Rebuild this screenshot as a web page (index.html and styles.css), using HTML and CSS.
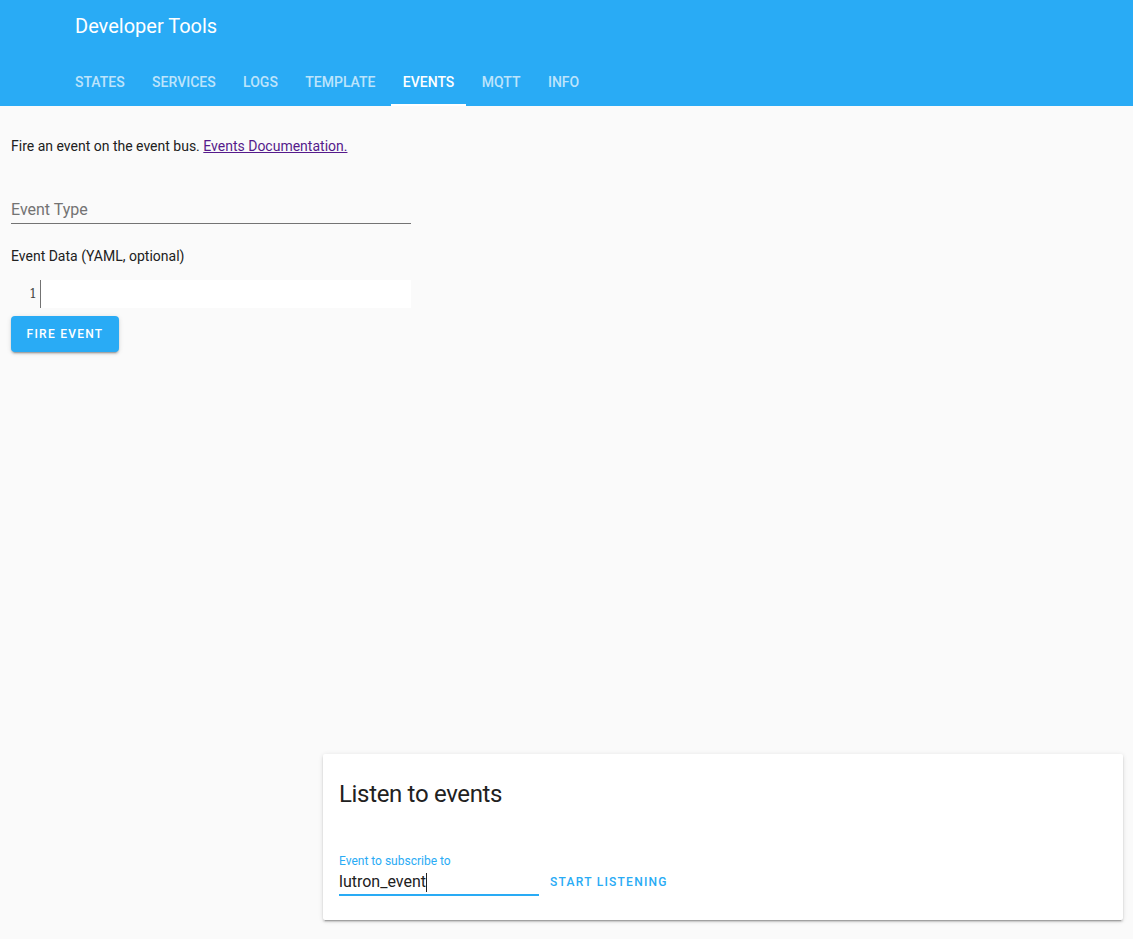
FILE: index.html
```html
<!DOCTYPE html>
<html lang="en">
<head>
<meta charset="utf-8">
<title>Developer Tools</title>
<link rel="stylesheet" href="styles.css">
</head>
<body>
<div class="page">
  <header class="header">
    <div class="title">Developer Tools</div>
    <nav class="tabs">
      <a class="tab">STATES</a>
      <a class="tab">SERVICES</a>
      <a class="tab">LOGS</a>
      <a class="tab">TEMPLATE</a>
      <a class="tab active">EVENTS</a>
      <a class="tab">MQTT</a>
      <a class="tab">INFO</a>
    </nav>
  </header>
  <main class="main">
    <section class="fire">
      <p class="intro">Fire an event on the event bus. <a class="doc" href="#">Events Documentation.</a></p>
      <div class="field"><span class="placeholder">Event Type</span></div>
      <p class="data-label">Event Data (YAML, optional)</p>
      <div class="editor">
        <div class="gutter">1</div>
        <div class="code"></div>
      </div>
      <button class="fire-btn">FIRE EVENT</button>
    </section>
    <section class="listen">
      <h2 class="listen-title">Listen to events</h2>
      <div class="listen-row">
        <div class="sub-field">
          <label class="sub-label">Event to subscribe to</label>
          <div class="sub-value">lutron_event<span class="caret"></span></div>
        </div>
        <button class="listen-btn">START LISTENING</button>
      </div>
    </section>
  </main>
</div>
</body>
</html>
```

FILE: styles.css
```css
* { box-sizing: border-box; }
html, body { margin: 0; height: 100%; }
body {
  background: #fafafa;
  font-family: Roboto, "Liberation Sans", sans-serif;
  color: #212121;
  overflow: hidden;
}
.page { height: 939px; display: flex; flex-direction: column; }
.header {
  height: 106px;
  background: #29abf5;
  color: #fff;
  padding-left: 63px;
  display: flex;
  flex-direction: column;
}
.title {
  font-size: 20px;
  line-height: 20px;
  padding: 16px 0 0 12px;
  height: 58px;
}
.tabs { display: flex; height: 48px; }
.tab {
  padding: 0 12px;
  margin-right: 3.4px;
  font-size: 14px;
  font-weight: 500;
  line-height: 48px;
  color: rgba(255,255,255,.7);
}
.tab.active {
  color: #fff;
  border-bottom: 2px solid #fff;
}
.main {
  flex: 1;
  position: relative;
  display: flex;
  flex-direction: column;
}
.fire { width: 422px; padding: 0 11px; }
.intro {
  margin: 31px 0 0;
  font-size: 14px;
  line-height: 18px;
}
.doc { color: #551a8b; text-decoration: underline; }
.field {
  margin-top: 34px;
  height: 35px;
  border-bottom: 1px solid #737373;
  font-size: 16px;
  line-height: 24px;
  padding-top: 9px;
}
.placeholder { color: #737373; }
.data-label {
  margin: 22px 0 0;
  font-size: 14px;
  line-height: 20px;
}
.editor {
  margin-top: 14px;
  height: 28px;
  display: flex;
  background: #fff;
}
.gutter {
  width: 30px;
  background: #fafafa;
  border-right: 1px solid #737373;
  text-align: right;
  padding: 1px 3px 0 0;
  font-family: "DejaVu Serif", "Liberation Serif", serif;
  font-size: 12px;
  line-height: 27px;
  color: #424242;
}
.code { flex: 1; }
.fire-btn {
  display: block;
  margin-top: 8px;
  width: 108px;
  height: 36px;
  border: 0;
  border-radius: 4px;
  background: #29abf5;
  color: #fff;
  font: 500 12px Roboto, sans-serif;
  letter-spacing: 1.25px;
  box-shadow: 0 3px 1px -2px rgba(0,0,0,.2), 0 2px 2px 0 rgba(0,0,0,.14), 0 1px 5px 0 rgba(0,0,0,.12);
}
.listen {
  margin: auto 10px 19px 323px;
  height: 166px;
  background: #fff;
  border-radius: 2px;
  box-shadow: 0 2px 2px 0 rgba(0,0,0,.14), 0 1px 5px 0 rgba(0,0,0,.12), 0 3px 1px -2px rgba(0,0,0,.2);
  padding: 0 16px;
}
.listen-title {
  margin: 0;
  padding-top: 24px;
  font-size: 24px;
  font-weight: 400;
  line-height: 32px;
  letter-spacing: -0.33px;
}
.listen-row {
  margin-top: 44px;
  display: flex;
  align-items: flex-start;
}
.sub-field {
  width: 200px;
  height: 42px;
  border-bottom: 2px solid #29abf5;
}
.sub-label {
  display: block;
  font-size: 12px;
  line-height: 14px;
  color: #29abf5;
}
.sub-value {
  padding-top: 2px;
  font-size: 16px;
  line-height: 24px;
  display: flex;
  align-items: center;
}
.caret { width: 1px; height: 19px; background: #212121; }
.listen-btn {
  margin: 12px 0 0 3px;
  height: 32px;
  padding: 0 8px;
  border: 0;
  background: none;
  color: #29abf5;
  font: 500 12px Roboto, sans-serif;
  letter-spacing: 1.25px;
}
```
